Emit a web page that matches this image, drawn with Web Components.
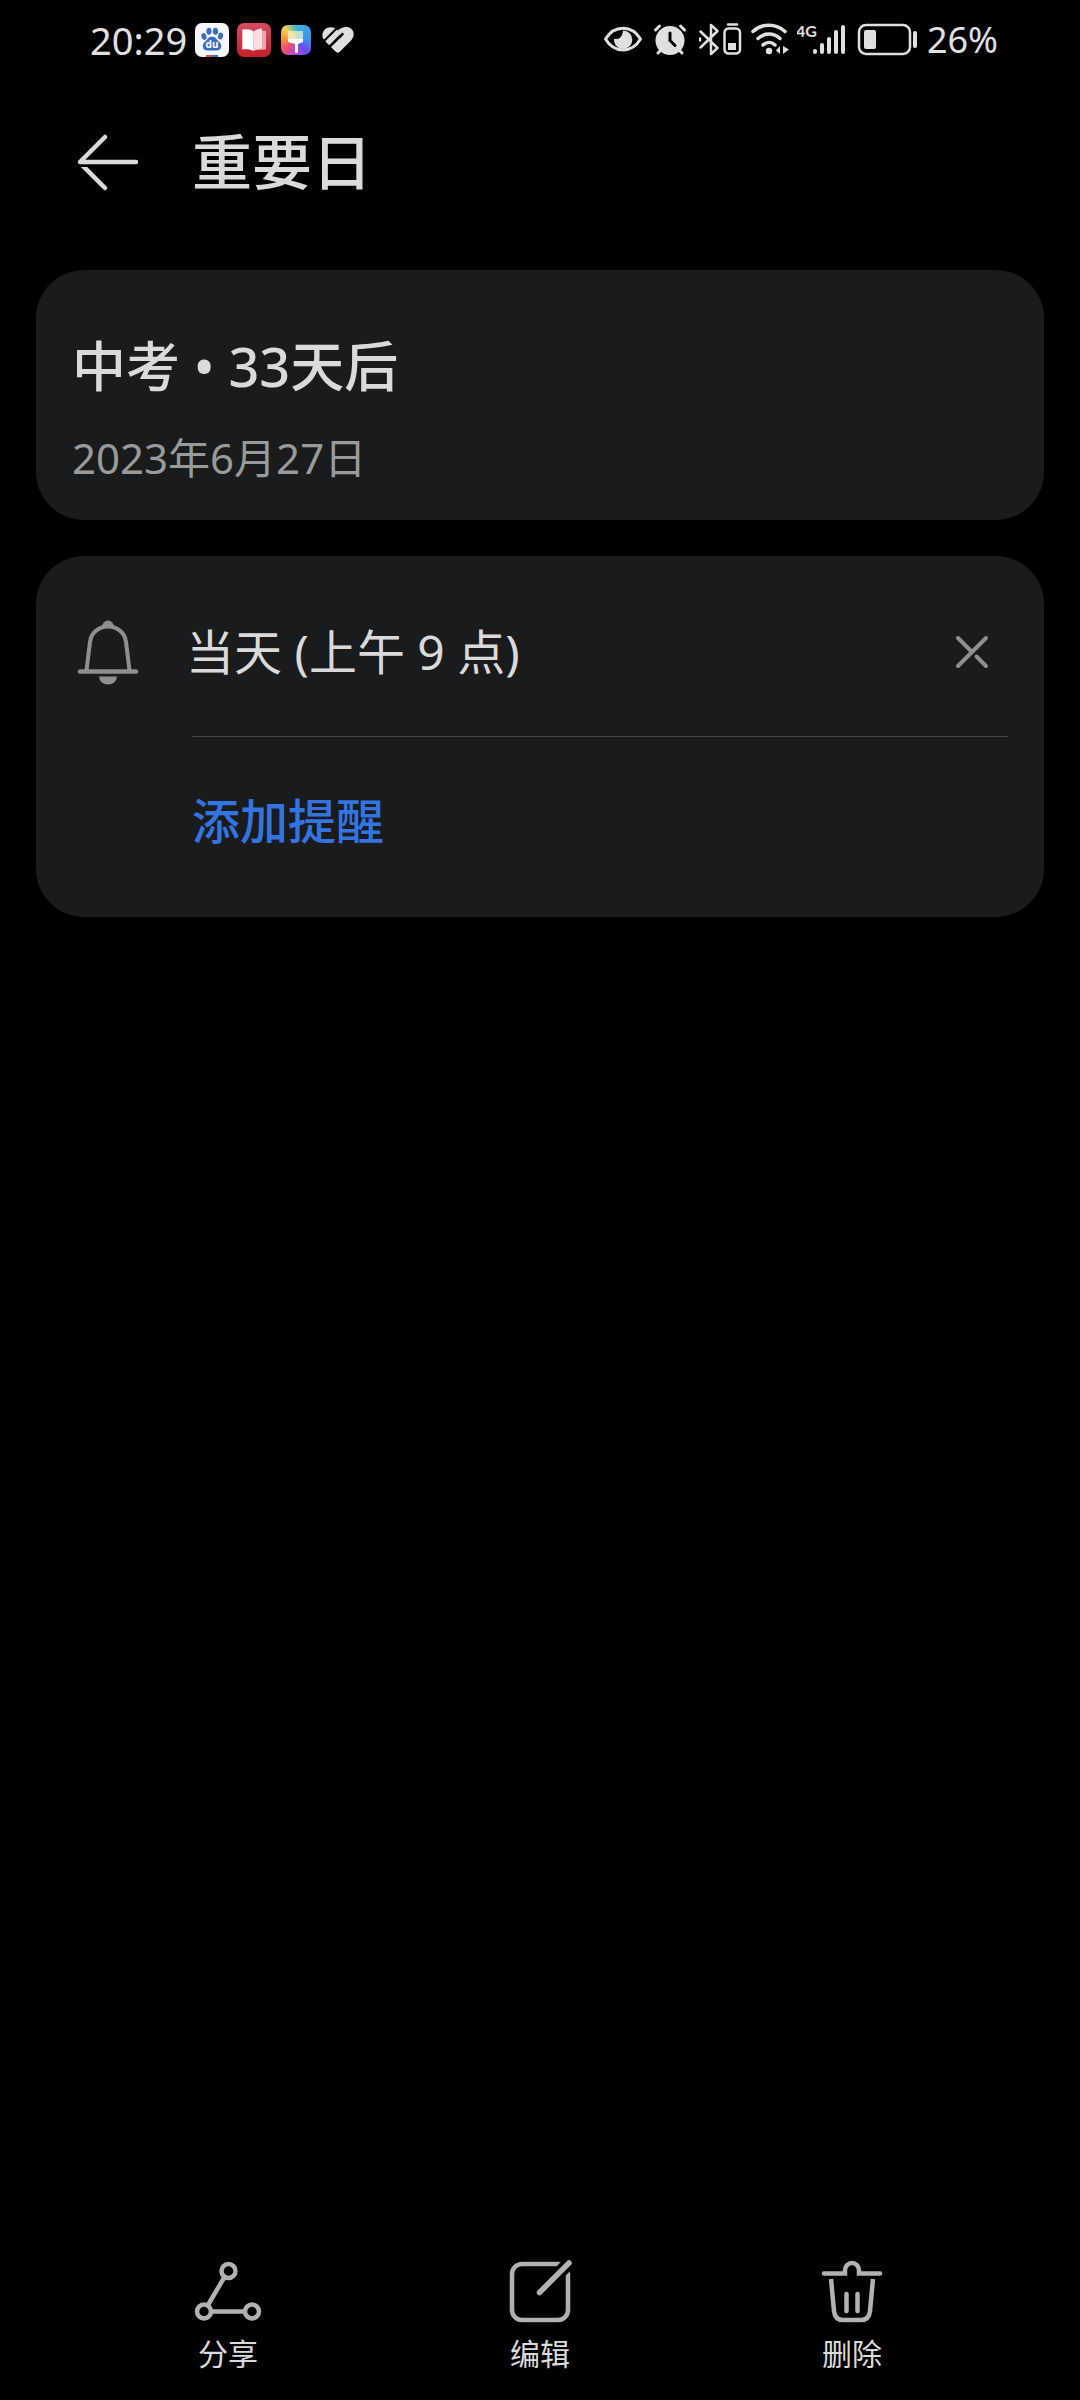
<!DOCTYPE html>
<html lang="zh-CN">
<head>
  <meta charset="UTF-8" />
  <meta name="viewport" content="width=device-width, initial-scale=1.0" />
  <title>重要日</title>
  <style>
    :root {
      --bg: #000;
      --card: #1a1b1c;
      --text: #dadada;
      --muted: #999a9a;
      --icon: #b2b2b2;
      --accent: #3474e0;
    }

    body {
      margin: 0;
      min-height: 100vh;
      display: flex;
      flex-direction: column;
      background: var(--bg);
      color: var(--text);
      font-family: "Noto Sans", "Noto Sans CJK SC", sans-serif;
    }

    main {
      flex: 1;
      display: flex;
      flex-direction: column;
      gap: 36px;
      padding: 26px 36px;
    }
  </style>
</head>
<body>
  <status-bar></status-bar>
  <page-header>重要日</page-header>
  <main>
    <info-card>
      <event-summary>
        中考 • 33天后
        <span slot="date">2023年6月27日</span>
      </event-summary>
    </info-card>
    <info-card>
      <reminder-list>
        当天 (上午 9 点)
        <span slot="add">添加提醒</span>
      </reminder-list>
    </info-card>
  </main>
  <bottom-bar>
    <bar-action icon="share">分享</bar-action>
    <bar-action icon="edit">编辑</bar-action>
    <bar-action icon="trash">删除</bar-action>
  </bottom-bar>

  <script>
    class StatusBar extends HTMLElement {
      constructor() {
        super();
        this.attachShadow({ mode: "open" });
        this.shadowRoot.innerHTML = `
    <style>
    :host {
      display: flex;
      justify-content: space-between;
      align-items: center;
      height: 80px;
      padding: 0 82px 0 90px;
      color: #e0e0e0;
    }

    div {
      display: flex;
      align-items: center;
      gap: 8px;
      line-height: 48px;
    }

    .time {
      font-size: 38px;
    }

    .percent {
      font-size: 36px;
    }

    svg {
      display: block;
      flex: none;
    }

    .brush {
      background: conic-gradient(#39b8d8, #3f8df5 25%, #6a4df0 38%, #b04be0 50%, #f0506a 64%, #f5903c 76%, #f3cf52 88%, #39b8d8);
      border-radius: 7px;
      margin: 0 2px;
    }
    </style>

    <div>
      <span class="time">20:29</span>
      <svg width="34" height="34" viewBox="0 0 34 34">
        <clipPath id="tile"><rect width="34" height="34" rx="7" /></clipPath>
        <g clip-path="url(#tile)">
          <rect width="34" height="34" fill="#f4f6fa" />
          <g fill="#3c6cc0">
            <ellipse cx="9" cy="13.500" rx="2.500" ry="3.400" transform="rotate(-15 9 13.500)" />
            <ellipse cx="14" cy="8.300" rx="2.600" ry="3.500" />
            <ellipse cx="20.500" cy="8.300" rx="2.600" ry="3.500" />
            <ellipse cx="25.500" cy="13" rx="2.500" ry="3.400" transform="rotate(15 25.500 13)" />
            <path d="M17 13.500c3.500 0 4.500 3 6.500 4.800 2 1.700 3 3.200 2.600 5.700-.5 3-2.600 3.600-5 3.500-3-.1-5.200-.1-8.200 0-2.400.1-4.500-.5-5-3.500-.4-2.500.6-4 2.600-5.700 2-1.800 3-4.800 6.500-4.800z" />
          </g>
          <text x="17" y="25" fill="#fff" font-size="10" font-weight="700" text-anchor="middle">du</text>
          <rect x="11" y="32" width="6" height="2" fill="#d84a50" />
          <rect x="17" y="32" width="6" height="2" fill="#3c6cc0" />
        </g>
      </svg>
      <svg width="34" height="34" viewBox="0 0 34 34">
        <linearGradient id="red" x2="0" y2="1"><stop stop-color="#d44c60" /><stop offset="1" stop-color="#c41f2b" /></linearGradient>
        <rect width="34" height="34" rx="7" fill="url(#red)" />
        <path d="M20 7l9 1v18.500l-10 .5z" fill="#eda4ae" />
        <path d="M5.300 6.500c5-.8 8.500-.3 11.400 2V28c-3-1.600-6.400-2-11.400-1.500z" fill="#fff" />
        <path d="M16.700 8.500c2.500-2 5-2.800 8.300-3v20c-3 .1-5.800.9-8.300 2.500z" fill="#f9dde1" />
      </svg>
      <svg class="brush" width="30" height="30" viewBox="0 0 30 30">
        <path d="M7 6h15v11H7z" fill="#f6f3c4" opacity=".75" />
        <path d="M7 14h15v3l-5 2v7.500a1.500 1.500 0 0 1-3 0V19l-7-2z" fill="#fff" />
      </svg>
      <svg width="34" height="34" viewBox="0 0 34 34">
        <path d="M17 7.500C13 3 6 3.500 3 7.500 0 11.500 1.500 15.500 4 18l11 11q2 1.500 3.500 0L30 17.500c3.500-4 3.500-8.500.5-11.500C26.500 2.500 20.500 4 17 7.500z" fill="currentColor" />
        <path d="M0 21L20 1" stroke="#000" stroke-width="2.200" />
        <path d="M2 30l19.500-19" stroke="#000" stroke-width="2.500" stroke-linecap="round" />
      </svg>
    </div>

    <div>
      <svg width="40" height="40" viewBox="0 0 40 40">
        <path d="M2.500 19C11 4.500 29 4.500 37.500 19 29 33.500 11 33.500 2.500 19z" fill="none" stroke="currentColor" stroke-width="3" stroke-linejoin="round" />
        <path d="M20 10.500a9.200 9.200 0 1 1-9 8c3.500 1.800 8.500-.5 9-8z" fill="currentColor" />
      </svg>
      <svg width="40" height="40" viewBox="0 0 40 40" fill="none" stroke="currentColor" stroke-width="3" stroke-linecap="round">
        <circle cx="19" cy="20.500" r="14.500" fill="currentColor" stroke="none" />
        <path d="M4.500 10l4-4M33.500 10l-4-4M7 33l3-3M31 33l-3-3" />
        <path d="M19 13v7.500l5 5" stroke="#000" />
      </svg>
      <svg width="44" height="40" viewBox="0 0 44 40" fill="none" stroke="currentColor" stroke-width="2.500" stroke-linejoin="round" stroke-linecap="round">
        <path d="M1.500 11.500l17 16.500-6.500 6V5l6.500 6L1.500 27.500M1 18.500v2" />
        <rect x="25.500" y="8.500" width="15.500" height="25" rx="4" />
        <path d="M29 4.500h9" />
        <path d="M29 23h8v7h-8z" fill="currentColor" stroke="none" />
      </svg>
      <svg width="38" height="40" viewBox="0 0 38 40" fill="none" stroke="currentColor" stroke-width="3.500" stroke-linecap="round">
        <path d="M2 11.500c9-8.500 23-8.500 32 0M7 18.500c6.500-6 15.500-6 22 0M12 25c4-3.500 8.500-3.500 12 0" />
        <circle cx="18" cy="31" r="3.200" fill="currentColor" stroke="none" />
        <path d="M29 26v8l-4-3.500zM32 26v8l6-4.500z" fill="currentColor" stroke="none" />
      </svg>
      <svg width="50" height="40" viewBox="0 0 50 40" fill="none" stroke="currentColor" stroke-width="4" stroke-linecap="round">
        <text x="-1" y="17" fill="currentColor" stroke="none" font-family="Lato, sans-serif" font-weight="700" font-size="16">4G</text>
        <path d="M18 31v1M25 25v7M32 19v13M39 12v20M46 7v25" />
      </svg>
      <svg width="64" height="40" viewBox="0 0 64 40">
        <rect x="4" y="5" width="51" height="29" rx="7" fill="none" stroke="currentColor" stroke-width="2.500" />
        <rect x="9" y="10" width="12" height="19" rx="2" fill="currentColor" />
        <rect x="58" y="11" width="4" height="17" rx="2" fill="currentColor" />
      </svg>
      <span class="percent">26%</span>
    </div>
    `;
      }
    }

    class PageHeader extends HTMLElement {
      constructor() {
        super();
        this.attachShadow({ mode: "open" });
        this.shadowRoot.innerHTML = `
    <style>
    :host {
      display: flex;
      align-items: center;
      gap: 48px;
      height: 164px;
      padding: 0 72px;
    }

    button {
      padding: 0;
      border: 0;
      background: none;
      color: inherit;
    }

    svg {
      display: block;
    }

    h1 {
      margin: 0;
      font-size: 60px;
      font-weight: 500;
      line-height: 80px;
    }
    </style>

    <button type="button" aria-label="返回">
      <svg width="72" height="72" viewBox="0 0 72 72" fill="none" stroke="currentColor" stroke-width="4.500" stroke-linecap="round" stroke-linejoin="round">
        <clipPath id="below"><path d="M0 41h72v31H0z" /></clipPath>
        <path d="M33 11L8 36h56" />
        <path d="M7 36l26 26" clip-path="url(#below)" />
      </svg>
    </button>
    <h1><slot></slot></h1>
    `;
      }
    }

    class InfoCard extends HTMLElement {
      constructor() {
        super();
        this.attachShadow({ mode: "open" });
        this.shadowRoot.innerHTML = `
    <style>
    :host {
      display: block;
      padding: 12px 36px;
      border-radius: 48px;
      background: var(--card);
    }
    </style>

    <slot></slot>
    `;
      }
    }

    class EventSummary extends HTMLElement {
      constructor() {
        super();
        this.attachShadow({ mode: "open" });
        this.shadowRoot.innerHTML = `
    <style>
    :host {
      display: flex;
      flex-direction: column;
      gap: 24px;
      padding: 44px 0 22px;
    }

    h2,
    p {
      margin: 0;
    }

    h2 {
      font-size: 54px;
      font-weight: 500;
      line-height: 80px;
    }

    p {
      color: var(--muted);
      font-size: 42px;
      line-height: 56px;
    }
    </style>

    <h2><slot></slot></h2>
    <p><slot name="date"></slot></p>
    `;
      }
    }

    class ReminderList extends HTMLElement {
      constructor() {
        super();
        this.attachShadow({ mode: "open" });
        this.shadowRoot.innerHTML = `
    <style>
    :host {
      display: block;
      font-size: 48px;
      line-height: 72px;
    }

    .row {
      display: flex;
      align-items: center;
      gap: 42px;
      height: 168px;
    }

    .row span {
      flex: 1;
    }

    svg {
      display: block;
      color: #8e8f90;
    }

    button {
      padding: 0;
      border: 0;
      background: none;
      font: inherit;
    }

    .add {
      display: flex;
      align-items: center;
      height: 168px;
      margin-left: 120px;
      border-top: 1px solid #48494a;
    }

    .add button {
      color: var(--accent);
      font-weight: 500;
    }
    </style>

    <div class="row">
      <svg width="72" height="72" viewBox="0 0 72 72" fill="none" stroke="currentColor" stroke-width="4" stroke-linecap="round">
        <path d="M8 55.500h56" stroke-width="4.500" />
        <path d="M14.500 54l3.500-28C19 17 26.500 10.500 36 10.500S53 17 54 26l3.500 28" />
        <path d="M30 11a6 6.500 0 0 1 12 0z" fill="currentColor" stroke="none" />
        <path d="M27 60.500h18a9 8 0 0 1-18 0z" fill="currentColor" stroke="none" />
      </svg>
      <span><slot></slot></span>
      <button type="button" aria-label="移除提醒">
        <svg width="72" height="72" viewBox="0 0 72 72" fill="none" stroke="currentColor" stroke-width="4" stroke-linecap="round">
          <path d="M22 50l28-28M22 22l13 13M40.500 40.500L50 50" />
        </svg>
      </button>
    </div>
    <div class="add">
      <button type="button"><slot name="add"></slot></button>
    </div>
    `;
      }
    }

    class BottomBar extends HTMLElement {
      constructor() {
        super();
        this.attachShadow({ mode: "open" });
        this.shadowRoot.innerHTML = `
    <style>
    :host {
      display: grid;
      grid-template-columns: repeat(3, 1fr);
      padding: 0 72px 26px;
    }
    </style>

    <slot></slot>
    `;
      }
    }

    const actionIcons = {
      share: `
        <path d="M32.500 21L16 49M19 55.500h34" />
        <circle cx="36.500" cy="15" r="7" />
        <circle cx="12" cy="55.500" r="7" />
        <circle cx="60" cy="55.500" r="7" />`,
      edit: `
        <rect x="8" y="8" width="56" height="56" rx="10" />
        <path d="M34 38L72 0" stroke="var(--bg)" stroke-width="13" stroke-linecap="butt" />
        <path d="M35.500 36.500L65 7" stroke-width="5.500" />`,
      trash: `
        <path d="M8 17.500h21V14a7 7 0 0 1 14 0v3.500h21" />
        <path d="M15 23l3 32c.6 6 4 9 9 9h18c5 0 8.400-3 9-9l3-32" stroke-linecap="butt" />
        <path d="M30.500 38v17M41.500 38v17" />`,
    };

    class BarAction extends HTMLElement {
      constructor() {
        super();
        this.attachShadow({ mode: "open" });
      }

      connectedCallback() {
        this.shadowRoot.innerHTML = `
    <style>
    :host {
      display: flex;
      justify-content: center;
    }

    button {
      display: flex;
      flex-direction: column;
      align-items: center;
      gap: 6px;
      padding: 0;
      border: 0;
      background: none;
      color: inherit;
      font: inherit;
      font-size: 30px;
      line-height: 40px;
    }

    svg {
      display: block;
      color: var(--icon);
    }
    </style>

    <button type="button">
      <svg width="72" height="72" viewBox="0 0 72 72" fill="none" stroke="currentColor" stroke-width="4.500" stroke-linecap="round">
        ${actionIcons[this.getAttribute("icon")]}
      </svg>
      <span><slot></slot></span>
    </button>
    `;
      }
    }

    window.customElements.define("status-bar", StatusBar);
    window.customElements.define("page-header", PageHeader);
    window.customElements.define("info-card", InfoCard);
    window.customElements.define("event-summary", EventSummary);
    window.customElements.define("reminder-list", ReminderList);
    window.customElements.define("bottom-bar", BottomBar);
    window.customElements.define("bar-action", BarAction);
  </script>
</body>
</html>
